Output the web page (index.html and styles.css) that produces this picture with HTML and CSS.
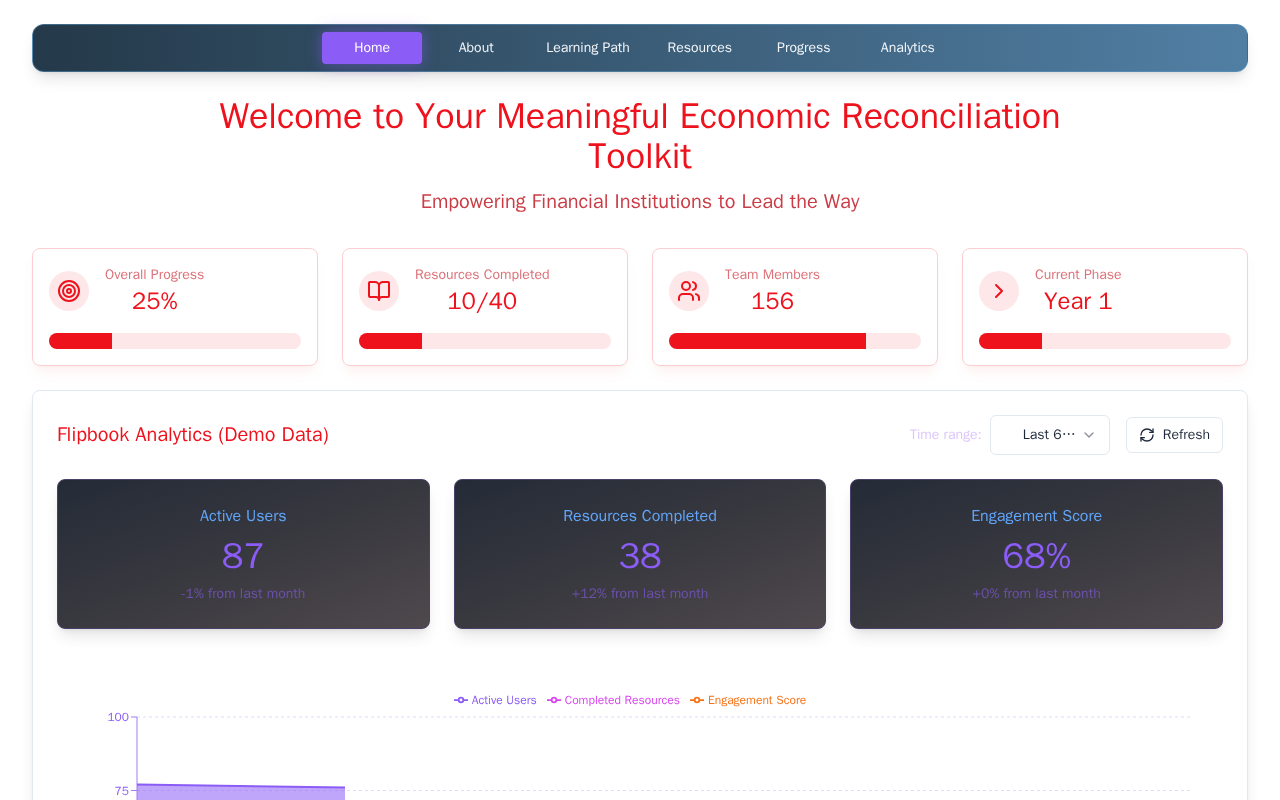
FILE: index.html
```
<!DOCTYPE html>
<html lang="en">
<head>
<meta charset="utf-8">
<meta name="viewport" content="width=device-width, initial-scale=1">
<title>Economic Reconciliation Toolkit</title>
<link rel="stylesheet" href="styles.css">
</head>
<body>
<div class="page">
  <nav class="nav" aria-label="Main">
    <a class="nav-link active" href="#home" aria-current="page">Home</a>
    <a class="nav-link" href="#about">About</a>
    <a class="nav-link" href="#learning">Learning Path</a>
    <a class="nav-link" href="#resources">Resources</a>
    <a class="nav-link" href="#progress">Progress</a>
    <a class="nav-link" href="#analytics">Analytics</a>
  </nav>

  <header class="hero">
    <h1>Welcome to Your Meaningful Economic Reconciliation Toolkit</h1>
    <p>Empowering Financial Institutions to Lead the Way</p>
  </header>

  <section class="stats" aria-label="Summary">
    <article class="stat">
      <div class="stat-head">
        <span class="stat-icon"><svg class="icon" viewBox="0 0 24 24"><circle cx="12" cy="12" r="10"/><circle cx="12" cy="12" r="6"/><circle cx="12" cy="12" r="2"/></svg></span>
        <div><p class="stat-label">Overall Progress</p><p class="stat-value">25%</p></div>
      </div>
      <div class="bar"><div class="bar-fill" style="width:25%"></div></div>
    </article>
    <article class="stat">
      <div class="stat-head">
        <span class="stat-icon"><svg class="icon" viewBox="0 0 24 24"><path d="M12 7v14"/><path d="M3 18a1 1 0 0 1-1-1V4a1 1 0 0 1 1-1h5a4 4 0 0 1 4 4 4 4 0 0 1 4-4h5a1 1 0 0 1 1 1v13a1 1 0 0 1-1 1h-6a3 3 0 0 0-3 3 3 3 0 0 0-3-3z"/></svg></span>
        <div><p class="stat-label">Resources Completed</p><p class="stat-value">10/40</p></div>
      </div>
      <div class="bar"><div class="bar-fill" style="width:25%"></div></div>
    </article>
    <article class="stat">
      <div class="stat-head">
        <span class="stat-icon"><svg class="icon" viewBox="0 0 24 24"><path d="M16 21v-2a4 4 0 0 0-4-4H6a4 4 0 0 0-4 4v2"/><circle cx="9" cy="7" r="4"/><path d="M22 21v-2a4 4 0 0 0-3-3.87"/><path d="M16 3.13a4 4 0 0 1 0 7.75"/></svg></span>
        <div><p class="stat-label">Team Members</p><p class="stat-value">156</p></div>
      </div>
      <div class="bar"><div class="bar-fill" style="width:78%"></div></div>
    </article>
    <article class="stat">
      <div class="stat-head">
        <span class="stat-icon"><svg class="icon" viewBox="0 0 24 24"><path d="m9 18 6-6-6-6"/></svg></span>
        <div><p class="stat-label">Current Phase</p><p class="stat-value">Year 1</p></div>
      </div>
      <div class="bar"><div class="bar-fill" style="width:25%"></div></div>
    </article>
  </section>

  <section class="panel">
    <div class="panel-head">
      <h2>Flipbook Analytics (Demo Data)</h2>
      <div class="controls">
        <label for="range">Time range:</label>
        <div class="select-wrap">
          <select id="range"><option>Last 6…</option></select>
          <svg class="icon chevron" viewBox="0 0 24 24"><path d="m6 9 6 6 6-6"/></svg>
        </div>
        <button class="refresh" type="button"><svg class="icon" viewBox="0 0 24 24"><path d="M3 12a9 9 0 0 1 9-9 9.75 9.75 0 0 1 6.74 2.74L21 8"/><path d="M21 3v5h-5"/><path d="M21 12a9 9 0 0 1-9 9 9.75 9.75 0 0 1-6.74-2.74L3 16"/><path d="M8 16H3v5"/></svg>Refresh</button>
      </div>
    </div>

    <div class="metrics">
      <article class="metric"><h3>Active Users</h3><p class="metric-value">87</p><p class="metric-note">-1% from last month</p></article>
      <article class="metric"><h3>Resources Completed</h3><p class="metric-value">38</p><p class="metric-note">+12% from last month</p></article>
      <article class="metric"><h3>Engagement Score</h3><p class="metric-value">68%</p><p class="metric-note">+0% from last month</p></article>
    </div>

    <div class="chart">
      <ul class="legend">
        <li class="users"><svg viewBox="0 0 32 32"><path d="M0 16h10.667a5.333 5.333 0 1 1 10.667 0H32M21.333 16a5.333 5.333 0 1 1-10.667 0"/></svg>Active Users</li>
        <li class="resources"><svg viewBox="0 0 32 32"><path d="M0 16h10.667a5.333 5.333 0 1 1 10.667 0H32M21.333 16a5.333 5.333 0 1 1-10.667 0"/></svg>Completed Resources</li>
        <li class="score"><svg viewBox="0 0 32 32"><path d="M0 16h10.667a5.333 5.333 0 1 1 10.667 0H32M21.333 16a5.333 5.333 0 1 1-10.667 0"/></svg>Engagement Score</li>
      </ul>
      <svg class="plot" viewBox="0 0 1166 320" role="img" aria-label="Usage over time">
        <g class="grid"><path d="M80 9H1133"/><path d="M80 82.500H1133"/><path d="M80 156H1133"/><path d="M80 229.500H1133"/><path d="M80 303H1133"/></g>
        <path class="area" d="M80 76.500L288 79.500V303H80Z"/>
        <path class="axis" d="M80 9V303M74 9H80M74 82.500H80M74 156H80M74 229.500H80M74 303H80"/>
        <path class="line" d="M80 76.500L288 79.500"/>
        <g class="ticks"><text x="72" y="13">100</text><text x="72" y="87">75</text><text x="72" y="160">50</text><text x="72" y="234">25</text><text x="72" y="307">0</text></g>
      </svg>
    </div>
  </section>
</div>
</body>
</html>
```
FILE: styles.css
```
* { box-sizing: border-box; }
body {
  margin: 0;
  background: #fff;
  color: #1e293b;
  font-family: "WenQuanYi Zen Hei", "Liberation Sans", "Noto Sans CJK JP", sans-serif;
  font-size: 14px;
  line-height: 20px;
}
h1, h2, h3, p, ul { margin: 0; padding: 0; font-weight: 400; }
.icon { width: 16px; height: 16px; fill: none; stroke: currentColor; stroke-width: 2; stroke-linecap: round; stroke-linejoin: round; }

.page { display: flex; flex-direction: column; gap: 24px; padding: 24px 32px; }

.nav {
  display: flex;
  justify-content: center;
  gap: 4px;
  padding: 7px;
  border: 1px solid rgba(96, 155, 200, .5);
  border-radius: 12px;
  background: linear-gradient(90deg, #243949, #517fa4);
  box-shadow: 0 10px 15px -3px rgba(0, 0, 0, .1), 0 4px 6px -4px rgba(0, 0, 0, .1);
}
.nav-link {
  min-width: 100px;
  padding: 6px 16px;
  border-radius: 4px;
  color: #f1f5f9;
  text-align: center;
  text-decoration: none;
}
.nav-link.active { background: #8b5cf6; color: #fff; box-shadow: 0 0 15px rgba(139, 92, 246, .5); }

.hero { text-align: center; padding-bottom: 8px; }
.hero h1 { max-width: 896px; margin: 0 auto 12px; color: #ee121d; font-size: 36px; line-height: 40px; }
.hero p { color: #cb3d46; font-size: 20px; line-height: 28px; }

.stats { display: grid; grid-template-columns: repeat(4, 1fr); gap: 24px; }
.stat {
  padding: 16px;
  border: 1px solid #fbcfd1;
  border-radius: 8px;
  box-shadow: 0 10px 15px -3px rgba(238, 18, 29, .05), 0 4px 6px -4px rgba(238, 18, 29, .05);
}
.stat-head { display: flex; align-items: center; gap: 16px; margin-bottom: 16px; text-align: center; }
.stat-icon { display: grid; place-items: center; width: 40px; height: 40px; border-radius: 50%; background: #fde7e8; color: #ee121d; }
.stat-icon .icon { width: 24px; height: 24px; }
.stat-label { color: #dc7178; }
.stat-value { color: #ee121d; font-size: 24px; line-height: 32px; }
.bar { height: 16px; overflow: hidden; border-radius: 8px; background: #fde7e8; }
.bar-fill { height: 100%; background: #ee121d; }

.panel {
  padding: 24px;
  border: 1px solid #e2e8f0;
  border-radius: 8px;
  box-shadow: 0 10px 15px -3px rgba(0, 0, 0, .1), 0 4px 6px -4px rgba(0, 0, 0, .1);
}
.panel-head { display: flex; align-items: center; justify-content: space-between; margin-bottom: 24px; }
.panel-head h2 { color: #ee121d; font-size: 20px; line-height: 28px; }
.controls { display: flex; align-items: center; gap: 8px; }
.controls label { color: #dcc6fb; }
.select-wrap { position: relative; width: 120px; margin-right: 8px; }
.select-wrap select {
  appearance: none;
  width: 100%;
  height: 40px;
  padding: 0 12px 0 32px;
  border: 1px solid #e2e8f0;
  border-radius: 6px;
  background: #fff;
  color: #1e293b;
  font: inherit;
}
.chevron { position: absolute; right: 13px; top: 12px; color: #8b8f98; pointer-events: none; }
.refresh {
  display: flex;
  align-items: center;
  gap: 8px;
  height: 36px;
  padding: 0 12px;
  border: 1px solid #e2e8f0;
  border-radius: 6px;
  background: #fff;
  color: #1e293b;
  font: inherit;
}

.metrics { display: grid; grid-template-columns: repeat(3, 1fr); gap: 24px; }
.metric {
  padding: 24px;
  border: 1px solid #4b4068;
  border-radius: 8px;
  background: linear-gradient(160deg, #242b37, #38383f 50%, #4f494d);
  box-shadow: 0 10px 15px -3px rgba(0, 0, 0, .1), 0 4px 6px -4px rgba(0, 0, 0, .1);
  text-align: center;
}
.metric h3 { color: #60a5fa; font-size: 16px; line-height: 24px; }
.metric-value { margin: 8px 0; color: #8b5cf6; font-size: 36px; line-height: 40px; }
.metric-note { color: #6b50ab; }

.chart { padding-top: 63px; }
.legend { display: flex; justify-content: center; gap: 10px; padding-right: 20px; font-size: 12px; line-height: 16px; list-style: none; }
.legend li { display: flex; align-items: center; gap: 4px; }
.legend svg { width: 14px; height: 14px; fill: none; stroke: currentColor; stroke-width: 4; }
.users { color: #8b5cf6; }
.resources { color: #d946ef; }
.score { color: #f97316; }
.plot { display: block; width: 100%; height: auto; }
.grid { stroke: #e2dafc; stroke-dasharray: 3 3; }
.axis { fill: none; stroke: #a07df7; }
.area { fill: #8b5cf6; fill-opacity: .55; }
.line { fill: none; stroke: #8b5cf6; stroke-width: 2; }
.ticks { fill: #8b5cf6; font-size: 12px; text-anchor: end; }
```
